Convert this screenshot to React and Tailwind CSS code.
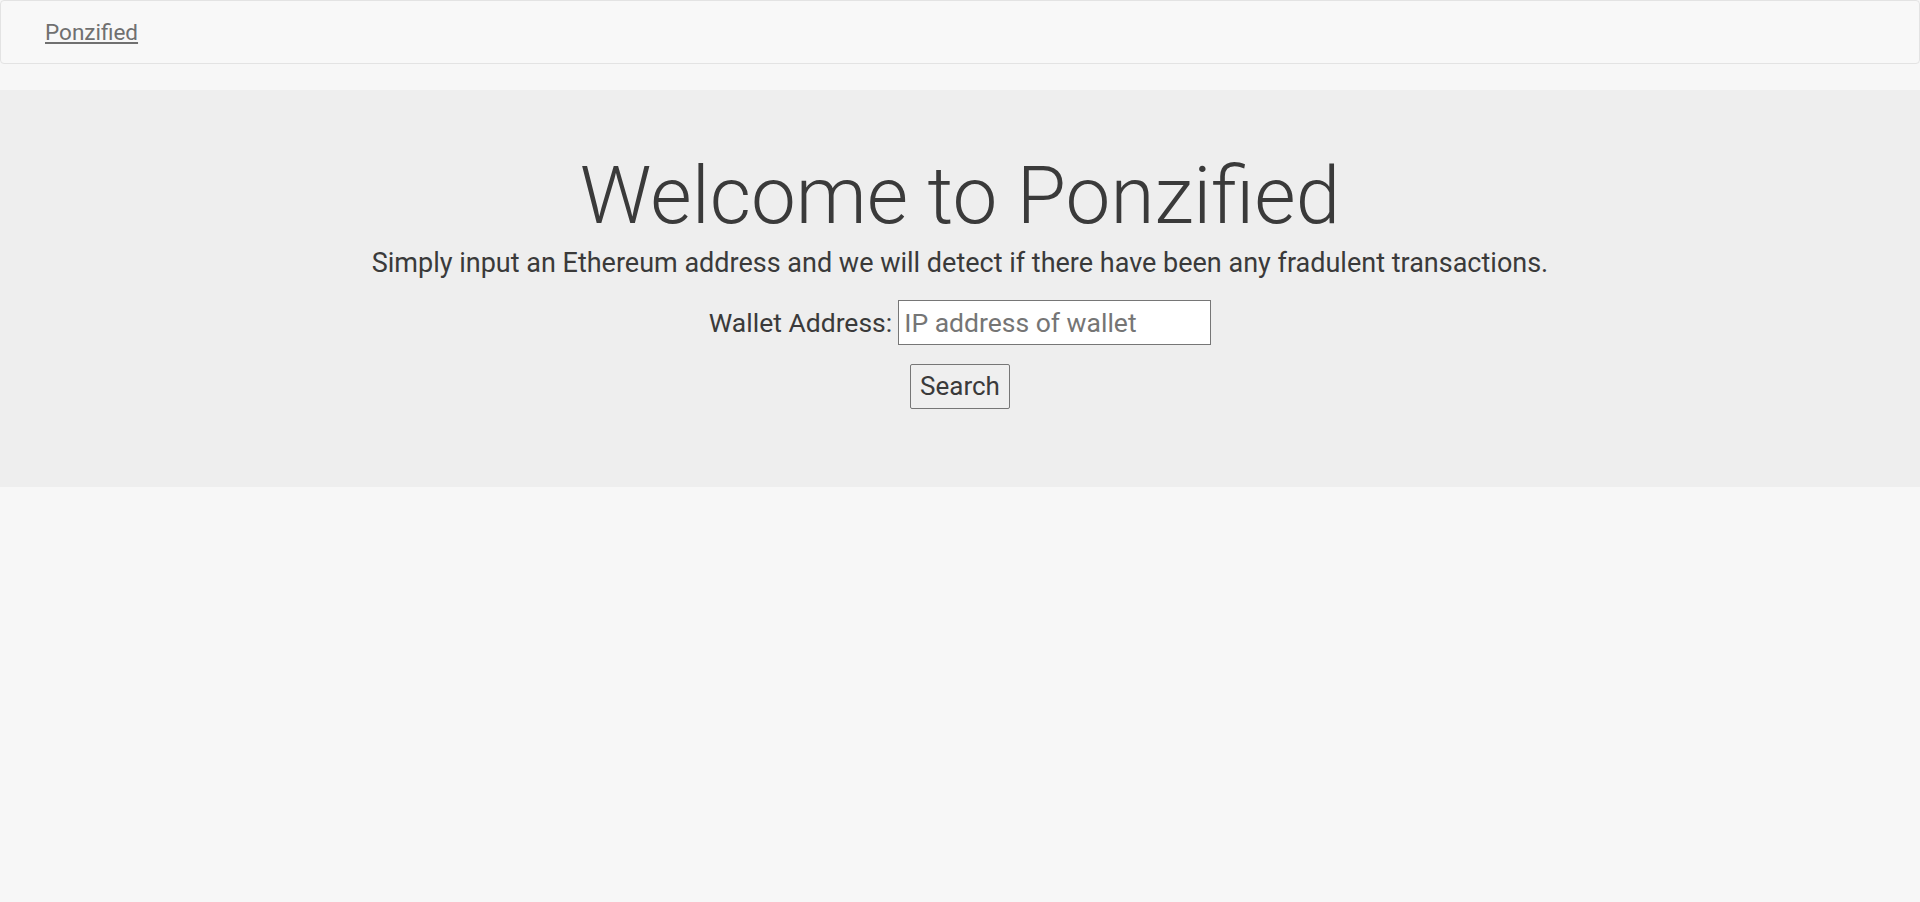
import React from "react";

function Navbar() {
  return (
    <nav className="h-[64px] border border-[#e3e3e3] rounded bg-[#f8f8f8] flex items-center pl-[44px]">
      <a href="#" className="text-[22.5px] leading-none text-[#707070] underline">
        Ponzified
      </a>
    </nav>
  );
}

function Hero() {
  return (
    <section className="mt-[26px] bg-[#eeeeee] pt-[58px] pb-[78px] flex flex-col items-center text-[#3a3a3a]">
      <h1 className="text-[80px] leading-[96px] font-light">Welcome to Ponzified</h1>
      <p className="mt-[2px] text-[27px] leading-[34px]">
        Simply input an Ethereum address and we will detect if there have been any fradulent transactions.
      </p>
      <form className="mt-[20px] flex flex-col items-center">
        <div className="flex items-center gap-[6px]">
          <label className="text-[26.5px]">Wallet Address:</label>
          <input
            type="text"
            placeholder="IP address of wallet"
            className="w-[313px] h-[45px] px-[5px] text-[26.5px] bg-white border border-[#767676] placeholder:text-[#757575] outline-none"
          />
        </div>
        <button
          type="button"
          className="mt-[19px] w-[100px] h-[45px] text-[26px] bg-[#efefef] border border-[#767676] rounded-[2px]"
        >
          Search
        </button>
      </form>
    </section>
  );
}

export default function App() {
  return (
    <div className="min-h-screen bg-[#f7f7f7]" style={{ fontFamily: "Roboto, 'Noto Sans', sans-serif" }}>
      <Navbar />
      <Hero />
    </div>
  );
}
